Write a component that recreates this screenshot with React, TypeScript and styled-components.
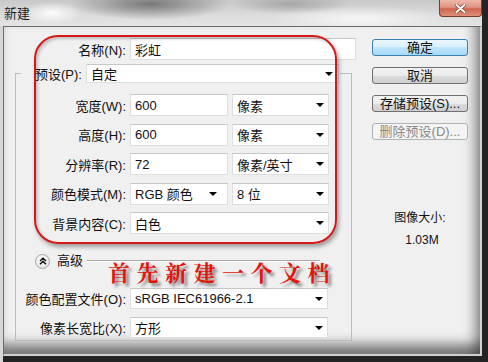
import styled, { createGlobalStyle, css } from "styled-components";

const uiFont = `"Liberation Sans", "Noto Sans CJK SC", sans-serif`;

const GlobalStyle = createGlobalStyle`
  html, body {
    margin: 0;
    padding: 0;
    background: #fff;
  }
  * {
    box-sizing: border-box;
  }
`;

const Window = styled.div`
  position: relative;
  width: 488px;
  height: 362px;
  display: flex;
  flex-direction: column;
  padding: 0 6px 6px 0;
  overflow: hidden;
  background: linear-gradient(to right, #d6d6d6 3px, #232323 3px);
  font-family: ${uiFont};
  font-size: 13px;
  color: #111;
`;

const TitleBar = styled.div`
  flex: none;
  height: 26px;
  display: flex;
  justify-content: space-between;
  align-items: flex-start;
  background:
    radial-gradient(ellipse 30px 11px at 52px 13px, rgba(255, 255, 255, 0.95), rgba(255, 255, 255, 0)),
    radial-gradient(ellipse 80px 16px at 150px 4px, rgba(105, 105, 105, 0.85), rgba(105, 105, 105, 0)),
    radial-gradient(ellipse 60px 10px at 290px 4px, rgba(140, 140, 140, 0.6), rgba(140, 140, 140, 0)),
    radial-gradient(ellipse 90px 12px at 360px 18px, rgba(255, 255, 255, 0.75), rgba(255, 255, 255, 0)),
    linear-gradient(to bottom, #c9c9c9, #dcdcdc 60%, #e4e4e4);
`;

const Title = styled.span`
  padding: 5px 0 0 4px;
  font-size: 13px;
  line-height: 17px;
  color: #1c1c1c;
`;

const CloseButton = styled.div`
  width: 43px;
  height: 17px;
  display: flex;
  align-items: center;
  justify-content: center;
  border: 1px solid #7b3a2e;
  border-top: none;
  border-radius: 0 0 4px 4px;
  background: linear-gradient(to bottom, #eeb8aa, #e0937f 45%, #cf6550 55%, #dc907a);
`;

const Body = styled.div`
  flex: 1;
  display: flex;
  align-items: flex-start;
  margin-left: 3px;
  padding-left: 11px;
  border-left: 1px solid #6e6e6e;
  border-top: 1px solid #6a6a6a;
  border-right: 2px solid #d2d2d2;
  border-bottom: 2px solid #cfcfcf;
  background: #f0f0f0;
  box-shadow:
    inset -14px 0 12px -8px rgba(0, 0, 0, 0.38),
    inset 0 -16px 12px -6px rgba(0, 0, 0, 0.5);
`;

const LeftColumn = styled.div`
  width: 341px;
  margin-top: 11px;
`;

const NameRow = styled.div`
  display: grid;
  grid-template-columns: 111px 226px;
  column-gap: 4px;
  height: 22px;
`;

const Label = styled.span`
  display: flex;
  align-items: center;
  justify-content: flex-end;
  white-space: nowrap;
  color: #111;
`;

const Field = styled.div<{ $span?: number }>`
  display: flex;
  align-items: center;
  padding-left: 4px;
  background: #fff;
  border: 1px solid #dedede;
  border-top-color: #c6c6c6;
  white-space: nowrap;
  grid-column: span ${(p) => p.$span ?? 1};
`;

const Select = styled(Field)<{ $arrowInset?: number }>`
  position: relative;
  &::after {
    content: "";
    position: absolute;
    top: 50%;
    right: ${(p) => p.$arrowInset ?? 5}px;
    margin-top: -2px;
    border-left: 4px solid transparent;
    border-right: 4px solid transparent;
    border-top: 4px solid #000;
  }
`;

const GroupBox = styled.fieldset`
  width: 337px;
  min-inline-size: 0;
  margin: 4px 0 0;
  padding: 11px 0 2px;
  border: 1px solid #bcbcbc;
`;

const Legend = styled.legend`
  display: flex;
  align-items: stretch;
  gap: 4px;
  height: 19px;
  margin-left: 5px;
  padding: 0 1px 0 14px;
`;

const PresetSelect = styled(Select)`
  width: 253px;
`;

const SizeGrid = styled.div`
  display: grid;
  grid-template-columns: 110px 98px 97px;
  grid-auto-rows: 22px;
  column-gap: 4px;
  row-gap: 7.5px;
`;

const AdvancedRow = styled.div`
  display: flex;
  align-items: center;
  height: 16px;
  margin-top: 19px;
  padding: 0 31px 0 19px;
`;

const Expander = styled.span`
  width: 15px;
  height: 15px;
  display: flex;
  align-items: center;
  justify-content: center;
  border: 1px solid #a3a3a3;
  border-radius: 50%;
  background: radial-gradient(circle at 40% 35%, #ffffff, #dcdcdc);
`;

const AdvancedText = styled.span`
  margin-left: 7px;
  line-height: 16px;
`;

const Divider = styled.span`
  flex: 1;
  height: 2px;
  margin-left: 4px;
  border-top: 1px solid #a9a9a9;
  border-bottom: 1px solid #fff;
`;

const ProfileGrid = styled.div`
  display: grid;
  grid-template-columns: 110px 198px;
  grid-auto-rows: 21px;
  column-gap: 4px;
  row-gap: 8px;
  margin-top: 19px;
`;

const RightColumn = styled.div`
  width: 96px;
  margin: 12px 0 0 16px;
  display: flex;
  flex-direction: column;
`;

const ButtonStack = styled.div`
  display: flex;
  flex-direction: column;
  gap: 11px;
`;

type Variant = "primary" | "normal" | "disabled";

const Button = styled.div<{ $variant?: Variant }>`
  height: 17px;
  display: flex;
  align-items: center;
  justify-content: center;
  border-radius: 3px;
  font-size: 13px;
  line-height: 15px;
  white-space: nowrap;
  ${(p) =>
    p.$variant === "primary"
      ? css`
          border: 1px solid #3c7fb1;
          background: linear-gradient(to bottom, #eaf6fd, #d9f0fc 50%, #bee6fd 50%, #a7d9f5);
          color: #111;
        `
      : p.$variant === "disabled"
      ? css`
          border: 1px solid #adb2b5;
          background: #f4f4f4;
          color: #8a8a8a;
        `
      : css`
          border: 1px solid #707070;
          background: linear-gradient(to bottom, #f2f2f2, #ebebeb 50%, #dddddd 50%, #cfcfcf);
          color: #111;
        `}
`;

const Info = styled.div`
  margin-top: 70px;
  display: flex;
  flex-direction: column;
  align-items: center;
  font-size: 12px;
  line-height: 16px;
  color: #111;
`;

const InfoValue = styled.span`
  margin-top: 6px;
  padding-left: 4px;
`;

const Highlight = styled.div`
  position: absolute;
  left: 34px;
  top: 35px;
  width: 303px;
  height: 209px;
  border: 2px solid #d41818;
  border-radius: 24px;
  box-shadow:
    2px 3px 4px rgba(0, 0, 0, 0.35),
    inset 2px 2px 3px rgba(0, 0, 0, 0.2);
  pointer-events: none;
`;

const Caption = styled.div`
  position: absolute;
  left: 108px;
  top: 259px;
  font-family: "Noto Serif CJK SC", "Noto Sans CJK SC", serif;
  font-size: 22px;
  font-weight: 700;
  line-height: 26px;
  letter-spacing: 6.5px;
  color: #e3140c;
  text-shadow: 3px 3px 3px rgba(0, 0, 0, 0.45);
  white-space: nowrap;
  pointer-events: none;
`;

function CloseIcon() {
  return (
    <svg width="11" height="9" viewBox="0 0 11 9">
      <path d="M1.5 1 L9.5 8 M9.5 1 L1.5 8" stroke="#7a3328" strokeWidth="3.2" strokeLinecap="round" />
      <path d="M1.5 1 L9.5 8 M9.5 1 L1.5 8" stroke="#ffffff" strokeWidth="2" strokeLinecap="round" />
    </svg>
  );
}

function ChevronsUp() {
  return (
    <svg width="8" height="8" viewBox="0 0 8 8">
      <path d="M1 4 L4 1.2 L7 4 M1 7.2 L4 4.4 L7 7.2" fill="none" stroke="#111" strokeWidth="1.5" />
    </svg>
  );
}

export default function App() {
  return (
    <>
      <GlobalStyle />
      <Window>
        <TitleBar>
          <Title>新建</Title>
          <CloseButton>
            <CloseIcon />
          </CloseButton>
        </TitleBar>
        <Body>
          <LeftColumn>
            <NameRow>
              <Label>名称(N):</Label>
              <Field>彩虹</Field>
            </NameRow>
            <GroupBox>
              <Legend>
                <Label>预设(P):</Label>
                <PresetSelect $arrowInset={5}>自定</PresetSelect>
              </Legend>
              <SizeGrid>
                <Label>宽度(W):</Label>
                <Field>600</Field>
                <Select $arrowInset={4}>像素</Select>
                <Label>高度(H):</Label>
                <Field>600</Field>
                <Select $arrowInset={4}>像素</Select>
                <Label>分辨率(R):</Label>
                <Field>72</Field>
                <Select $arrowInset={4}>像素/英寸</Select>
                <Label>颜色模式(M):</Label>
                <Select $arrowInset={10}>RGB 颜色</Select>
                <Select $arrowInset={4}>8 位</Select>
                <Label>背景内容(C):</Label>
                <Select $span={2} $arrowInset={4}>白色</Select>
              </SizeGrid>
              <AdvancedRow>
                <Expander>
                  <ChevronsUp />
                </Expander>
                <AdvancedText>高级</AdvancedText>
                <Divider />
              </AdvancedRow>
              <ProfileGrid>
                <Label>颜色配置文件(O):</Label>
                <Select $arrowInset={4}>sRGB IEC61966-2.1</Select>
                <Label>像素长宽比(X):</Label>
                <Select $arrowInset={4}>方形</Select>
              </ProfileGrid>
            </GroupBox>
          </LeftColumn>
          <RightColumn>
            <ButtonStack>
              <Button $variant="primary">确定</Button>
              <Button>取消</Button>
              <Button>存储预设(S)...</Button>
              <Button $variant="disabled">删除预设(D)...</Button>
            </ButtonStack>
            <Info>
              <span>图像大小:</span>
              <InfoValue>1.03M</InfoValue>
            </Info>
          </RightColumn>
        </Body>
        <Highlight />
        <Caption>首先新建一个文档</Caption>
      </Window>
    </>
  );
}
